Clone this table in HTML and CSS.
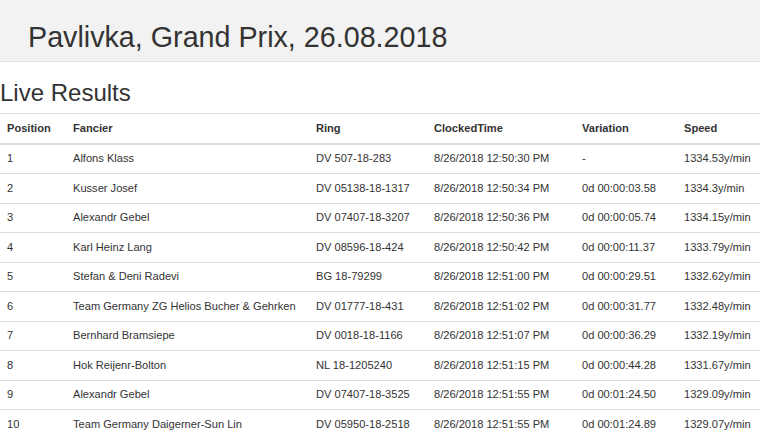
FILE: index.html
```html
<!DOCTYPE html>
<html lang="en">
<head>
    <meta charset="UTF-8">
    <meta name="viewport" content="width=device-width, initial-scale=1.0">
    <title>Live Results</title>
    <link rel="stylesheet" href="styles.css">
</head>
<body>
    <div class="banner">
        <h1>Pavlivka, Grand Prix, 26.08.2018</h1>
    </div>

    <div class="content">
        <h2>Live Results</h2>
        <table class="results">
            <colgroup>
                <col class="c-pos">
                <col class="c-name">
                <col class="c-ring">
                <col class="c-time">
                <col class="c-var">
                <col class="c-speed">
            </colgroup>
            <thead>
                <tr>
                    <th>Position</th>
                    <th>Fancier</th>
                    <th>Ring</th>
                    <th>ClockedTime</th>
                    <th>Variation</th>
                    <th>Speed</th>
                </tr>
            </thead>
            <tbody>
                <tr><td>1</td><td>Alfons Klass</td><td>DV 507-18-283</td><td>8/26/2018 12:50:30 PM</td><td>-</td><td>1334.53y/min</td></tr>
                <tr><td>2</td><td>Kusser Josef</td><td>DV 05138-18-1317</td><td>8/26/2018 12:50:34 PM</td><td>0d 00:00:03.58</td><td>1334.3y/min</td></tr>
                <tr><td>3</td><td>Alexandr Gebel</td><td>DV 07407-18-3207</td><td>8/26/2018 12:50:36 PM</td><td>0d 00:00:05.74</td><td>1334.15y/min</td></tr>
                <tr><td>4</td><td>Karl Heinz Lang</td><td>DV 08596-18-424</td><td>8/26/2018 12:50:42 PM</td><td>0d 00:00:11.37</td><td>1333.79y/min</td></tr>
                <tr><td>5</td><td>Stefan &amp; Deni Radevi</td><td>BG 18-79299</td><td>8/26/2018 12:51:00 PM</td><td>0d 00:00:29.51</td><td>1332.62y/min</td></tr>
                <tr><td>6</td><td>Team Germany ZG Helios Bucher &amp; Gehrken</td><td>DV 01777-18-431</td><td>8/26/2018 12:51:02 PM</td><td>0d 00:00:31.77</td><td>1332.48y/min</td></tr>
                <tr><td>7</td><td>Bernhard Bramsiepe</td><td>DV 0018-18-1166</td><td>8/26/2018 12:51:07 PM</td><td>0d 00:00:36.29</td><td>1332.19y/min</td></tr>
                <tr><td>8</td><td>Hok Reijenr-Bolton</td><td>NL 18-1205240</td><td>8/26/2018 12:51:15 PM</td><td>0d 00:00:44.28</td><td>1331.67y/min</td></tr>
                <tr><td>9</td><td>Alexandr Gebel</td><td>DV 07407-18-3525</td><td>8/26/2018 12:51:55 PM</td><td>0d 00:01:24.50</td><td>1329.09y/min</td></tr>
                <tr><td>10</td><td>Team Germany Daigerner-Sun Lin</td><td>DV 05950-18-2518</td><td>8/26/2018 12:51:55 PM</td><td>0d 00:01:24.89</td><td>1329.07y/min</td></tr>
            </tbody>
        </table>
    </div>
</body>
</html>
```

FILE: styles.css
```css
* {
    box-sizing: border-box;
    margin: 0;
    padding: 0;
}

body {
    font-family: "Liberation Sans", Arial, sans-serif;
    color: #333333;
    background: #ffffff;
    overflow: hidden;
}

.banner {
    background: #f2f2f2;
    border-bottom: 1px solid #e6e6e6;
    height: 62px;
    padding: 22.5px 0 0 28px;
}

.banner h1 {
    font-size: 28.7px;
    font-weight: normal;
    line-height: 1;
}

.content h2 {
    font-size: 24px;
    font-weight: normal;
    line-height: 1;
    margin-top: 19px;
    height: 32px;
}

.results {
    width: 760px;
    border-collapse: collapse;
    table-layout: fixed;
    font-size: 11.1px;
}

.c-pos { width: 66px; }
.c-name { width: 243px; }
.c-ring { width: 118px; }
.c-time { width: 148px; }
.c-var { width: 102px; }
.c-speed { width: 83px; }

.results th,
.results td {
    text-align: left;
    padding: 6.5px 7px;
    line-height: 15.5px;
    white-space: nowrap;
    border-top: 1px solid #dddddd;
}

.results th {
    font-weight: bold;
    padding: 7px 7px 6px;
    border-bottom: 2px solid #dddddd;
}
```
